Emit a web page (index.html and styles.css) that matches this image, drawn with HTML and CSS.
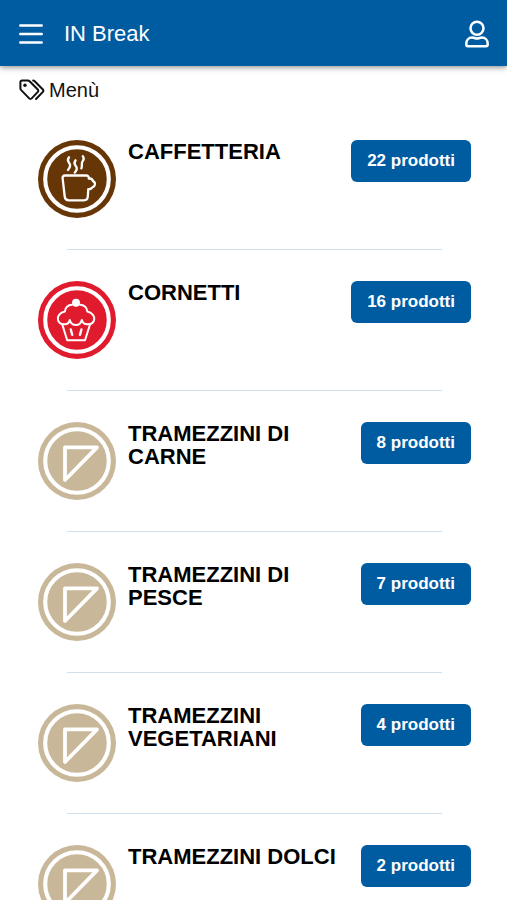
FILE: index.html
```html
<!DOCTYPE html>
<html lang="it">
  <head>
    <meta charset="utf-8">
    <title>IN Break</title>
    <meta name="viewport" content="width=device-width, initial-scale=1.0"/>
    <link rel="stylesheet" href="styles.css">
  </head>
  <body>

    <svg class="symbols" aria-hidden="true">
      <symbol id="ring" viewBox="0 0 78 78">
        <circle cx="39" cy="39" r="39" fill="currentColor" />
        <circle cx="39" cy="39" r="31.8" fill="none" stroke="#fff" stroke-width="4.1" />
      </symbol>
      <symbol id="sandwich" viewBox="0 0 78 78">
        <path d="M27 25.3H59L27 58Z" fill="none" stroke="#fff" stroke-width="3.8" stroke-linejoin="round" />
      </symbol>
    </svg>

    <header class="topbar">
      <button class="icon-button" aria-label="Apri menu">
        <svg width="24" height="20" viewBox="0 0 24 20" fill="none" stroke="#fff" stroke-width="2.5" stroke-linecap="round">
          <path d="M1.3 1.5H22.7M1.3 10H22.7M1.3 18.5H22.7" />
        </svg>
      </button>
      <h1>IN Break</h1>
      <button class="icon-button" aria-label="Profilo">
        <svg width="24" height="28" viewBox="0 0 24 28" fill="none" stroke="#fff" stroke-width="2.5" stroke-linejoin="round">
          <circle cx="12" cy="8.2" r="6.5" />
          <path d="M7.2 17.6C9 17.6 10 18.5 12 18.5S15 17.6 16.8 17.6C20.4 17.6 22.7 20.2 22.7 23.8V24.6C22.7 25.6 22 26.2 21 26.2H3C2 26.2 1.3 25.6 1.3 24.6V23.8C1.3 20.2 3.6 17.6 7.2 17.6Z" />
        </svg>
      </button>
    </header>

    <main>
      <h2 class="section-title">
        <svg width="26" height="22" viewBox="0 0 26 22" fill="none" stroke="#111" stroke-width="2" stroke-linejoin="round" stroke-linecap="round">
          <path d="M1.4 3V9.2C1.4 10 1.7 10.6 2.2 11.1L10.2 19.4C10.9 20.1 12 20.1 12.7 19.4L18.8 12.9C19.5 12.2 19.5 11.2 18.8 10.5L10.6 2.2C10.1 1.7 9.5 1.5 8.8 1.5H3C2 1.5 1.4 2.1 1.4 3Z" />
          <path d="M14.1 1.5C14.7 1.5 15.3 1.8 15.7 2.2L23.9 10.5C24.6 11.2 24.6 12.2 23.9 12.9L17 20" />
          <circle cx="6" cy="6.2" r="1.7" fill="#111" stroke="none" />
        </svg>
        Menù
      </h2>

      <ul class="categories">
        <li class="category">
          <svg class="category-icon coffee" viewBox="0 0 78 78">
            <use href="#ring" />
            <g fill="none" stroke="#fff" stroke-width="2.3" stroke-linecap="round" stroke-linejoin="round">
              <path d="M27 35.5H48C50 35.5 50.9 36.6 50.8 38.6C53 38.2 54.6 39.6 55 41.2C56.6 41.8 57.2 43.2 56.8 44.8C56.4 46 55.6 46.8 54.6 47.2C53.6 48.8 52.2 49.4 50.3 49.2L49.8 56.5C49.6 59 48.4 60.3 46 60.3H30.8C28.4 60.3 27 59 26.7 56.5L24.6 38.2C24.4 36.4 25.2 35.5 27 35.5Z" />
              <path d="M31 17.3C29 20 29.6 21.2 31 22.8C32.8 24.8 32.6 27 30 30M37.6 20.3C35.6 23 36.2 24.2 37.6 25.8C39.4 27.8 39.2 30 36.8 32.6M44.8 16.2C46.4 18.6 45.8 20 44.6 21.2C43 23 44.6 25.2 43.4 28.4" />
            </g>
          </svg>
          <h3>CAFFETTERIA</h3>
          <button class="count">22 prodotti</button>
        </li>
        <li class="category">
          <svg class="category-icon pastry" viewBox="0 0 78 78">
            <use href="#ring" />
            <g fill="none" stroke="#fff" stroke-width="2" stroke-linecap="round" stroke-linejoin="round">
              <path d="M34 23.8C30 23.8 27 26.8 26.9 30.5C22 31.5 19 35 20 39C20.8 42.3 23.5 43.5 27 43.3C29.5 43.2 31.2 41.5 31.8 39C32.5 42 34.6 44 38 44C41.2 44 43 42 43.8 39C44.6 42 46.5 43.5 49.8 43.3C53 43.2 55.7 41.5 56.2 38.5C56.8 35 54 31.5 49.3 30.5C49.2 26.8 46.2 23.8 42 23.8" />
              <path d="M24.3 43.5L29.2 59.2H47L52 43.5" />
              <path d="M32.8 48.5L34.2 53.8M43.4 48.5L42 53.8" stroke-width="2.4" />
              <circle cx="38" cy="21.7" r="3" fill="#fff" />
            </g>
          </svg>
          <h3>CORNETTI</h3>
          <button class="count">16 prodotti</button>
        </li>
        <li class="category">
          <svg class="category-icon bread" viewBox="0 0 78 78">
            <use href="#ring" />
            <use href="#sandwich" />
          </svg>
          <h3>TRAMEZZINI DI CARNE</h3>
          <button class="count">8 prodotti</button>
        </li>
        <li class="category">
          <svg class="category-icon bread" viewBox="0 0 78 78">
            <use href="#ring" />
            <use href="#sandwich" />
          </svg>
          <h3>TRAMEZZINI DI PESCE</h3>
          <button class="count">7 prodotti</button>
        </li>
        <li class="category">
          <svg class="category-icon bread" viewBox="0 0 78 78">
            <use href="#ring" />
            <use href="#sandwich" />
          </svg>
          <h3>TRAMEZZINI VEGETARIANI</h3>
          <button class="count">4 prodotti</button>
        </li>
        <li class="category">
          <svg class="category-icon bread" viewBox="0 0 78 78">
            <use href="#ring" />
            <use href="#sandwich" />
          </svg>
          <h3>TRAMEZZINI DOLCI</h3>
          <button class="count">2 prodotti</button>
        </li>
      </ul>
    </main>

  </body>
</html>
```
FILE: styles.css
```css
body {
    margin: 0;

    font-family: "Liberation Sans", Arial, sans-serif;
    color: #000;

    background: #fff;
}

h1, h2, h3 {
    margin: 0;
}

.symbols {
    display: none;
}

.topbar {
    display: flex;
    align-items: center;
    gap: 21px;
    padding: 20px 18px 18px 19px;

    color: #fff;

    background: #005ca1;
    box-shadow: 0 1px 6px rgba(0, 0, 0, .5);
}

.topbar h1 {
    flex: 1;

    font-size: 22px;
    font-weight: 400;
    line-height: 28px;
}

.icon-button {
    display: flex;
    padding: 0;

    border: none;

    background: none;
    cursor: pointer;
}

.section-title {
    display: flex;
    align-items: center;
    gap: 4px;
    padding: 12px 19px;

    font-size: 20px;
    font-weight: 400;
    line-height: 24px;
    color: #111;
}

.categories {
    margin: 0;
    padding: 26px 36px 30px 38px;

    list-style: none;
}

.category {
    display: flex;
    flex-wrap: wrap;
    align-items: flex-start;
}

.category + .category::before {
    content: "";
    flex: 0 0 100%;
    box-sizing: border-box;
    height: 1px;
    margin: 31px 0;

    border: solid #fff;
    border-width: 0 29px;

    background: #cfdfec;
}

.category-icon {
    width: 78px;
    height: 78px;
    margin-right: 12px;
}

.coffee {
    color: #673607;
}

.pastry {
    color: #e11b2e;
}

.bread {
    color: #c9b799;
}

.category h3 {
    flex: 1;

    font-size: 22px;
    font-weight: 700;
    line-height: 23px;
}

.count {
    padding: 11px 16px;

    border: none;
    border-radius: 6px;

    font-family: inherit;
    font-size: 17px;
    font-weight: 700;
    line-height: 20px;
    color: #fff;

    background: #005ca1;
    cursor: pointer;
}
```
